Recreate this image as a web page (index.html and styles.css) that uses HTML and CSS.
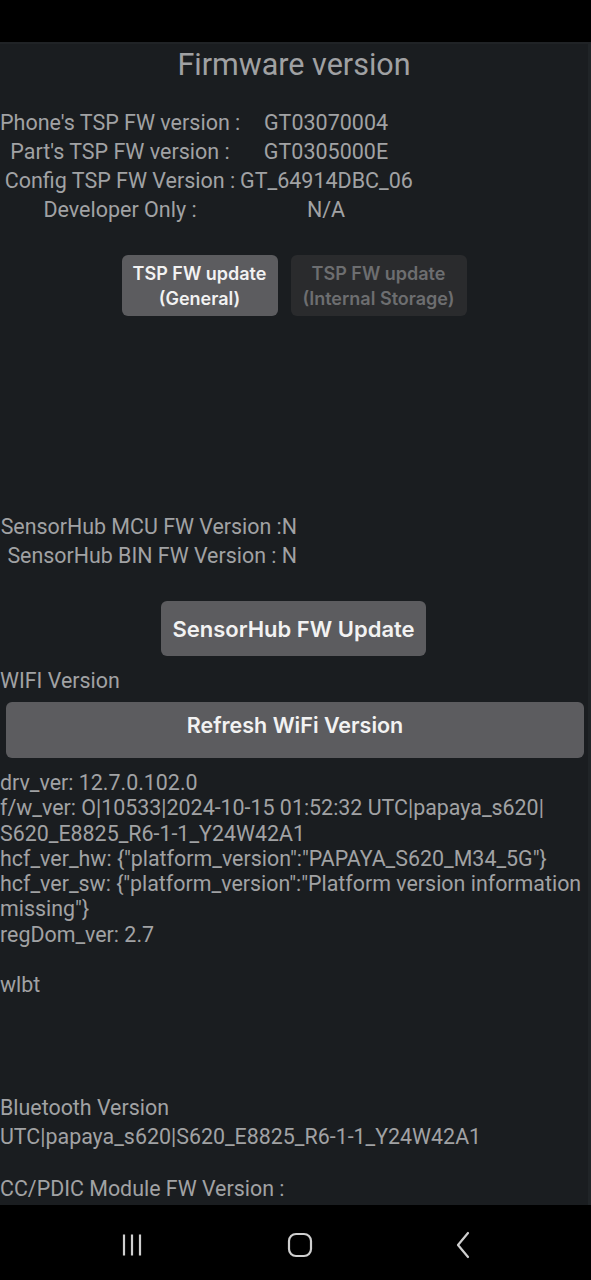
FILE: index.html
```html
<!DOCTYPE html>
<html>
<head>
<meta charset="utf-8">
<link rel="stylesheet" href="styles.css">
</head>
<body>
<div class="screen">
  <div class="statusbar"></div>
  <main class="content">
    <h1 class="title">Firmware version</h1>
    <div class="fwgrid">
      <div class="lbl">Phone's TSP FW version :</div><div class="val">GT03070004</div>
      <div class="lbl">Part's TSP FW version :</div><div class="val">GT0305000E</div>
      <div class="lbl">Config TSP FW Version :</div><div class="val">GT_64914DBC_06</div>
      <div class="lbl">Developer Only :</div><div class="val">N/A</div>
    </div>
    <div class="btnrow">
      <button class="btn btn-small btn-general">TSP FW update<br>(General)</button>
      <button class="btn btn-small btn-disabled">TSP FW update<br>(Internal Storage)</button>
    </div>
    <div class="sensor">
      <div class="line">SensorHub MCU FW Version :N</div>
      <div class="line">SensorHub BIN FW Version : N</div>
    </div>
    <div class="center">
      <button class="btn btn-big">SensorHub FW Update</button>
    </div>
    <div class="line wifi-label">WIFI Version</div>
    <button class="btn btn-wide">Refresh WiFi Version</button>
    <div class="wifi-info">
      drv_ver: 12.7.0.102.0<br>
      f/w_ver: O|10533|2024-10-15 01:52:32 UTC|papaya_s620|<br>S620_E8825_R6-1-1_Y24W42A1<br>
      hcf_ver_hw: {"platform_version":"PAPAYA_S620_M34_5G"}<br>
      hcf_ver_sw: {"platform_version":"Platform version information<br>missing"}<br>
      regDom_ver: 2.7<br>
      <br>
      wlbt
    </div>
    <div class="line bt-label">Bluetooth Version</div>
    <div class="line">UTC|papaya_s620|S620_E8825_R6-1-1_Y24W42A1</div>
    <div class="line cc-label">CC/PDIC Module FW Version :</div>
  </main>
  <nav class="navbar">
    <svg class="nav-icon" width="24" height="24" viewBox="0 0 24 24" aria-hidden="true">
      <path d="M3 1.5v21M11 1.5v21M19 1.5v21" stroke="#cfcfcf" stroke-width="2.2" fill="none"/>
    </svg>
    <svg class="nav-icon" width="26" height="26" viewBox="0 0 26 26" aria-hidden="true">
      <rect x="2" y="2" width="22" height="22" rx="7" stroke="#cfcfcf" stroke-width="2.2" fill="none"/>
    </svg>
    <svg class="nav-icon" width="16" height="28" viewBox="0 0 16 28" aria-hidden="true">
      <path d="M13 2L3 14l10 12" stroke="#cfcfcf" stroke-width="2.2" fill="none" stroke-linecap="round" stroke-linejoin="round"/>
    </svg>
  </nav>
</div>
</body>
</html>
```

FILE: styles.css
```css
* { box-sizing: border-box; }
html, body {
  margin: 0;
  padding: 0;
  background: #000;
}
.screen {
  width: 591px;
  height: 1280px;
  display: flex;
  flex-direction: column;
  overflow: hidden;
  font-family: Roboto, "Liberation Sans", sans-serif;
  color: #a1a2a4;
}
.statusbar {
  height: 42px;
  background: #000;
  flex: none;
}
.content {
  flex: 1;
  background: #1a1d20;
  overflow: hidden;
  border-right: 3px solid #202427;
  border-top: 2px solid #202326;
}
.title {
  margin: 4px 0 0;
  font-weight: 400;
  font-size: 30.5px;
  line-height: 34px;
  text-align: center;
  color: #a0a1a3;
}
.fwgrid {
  margin-top: 26px;
  display: grid;
  grid-template-columns: 240px 172px;
  font-size: 21.5px;
  line-height: 29px;
  text-align: center;
  white-space: nowrap;
}
.btnrow {
  margin-top: 31px;
  display: flex;
  justify-content: center;
  gap: 13px;
}
.btn {
  font-family: Inter, "Noto Sans", sans-serif;
  font-weight: 600;
  color: #f2f2f2;
  background: #5c5c5f;
  border: none;
  border-radius: 6px;
  padding: 0 8px;
  white-space: nowrap;
}
.btn-small {
  font-size: 18px;
  line-height: 25px;
  height: 61px;
}
.btn-general { width: 156px; }
.btn-disabled {
  width: 176px;
  background: #2a2b2d;
  color: #6d6e70;
}
.sensor {
  margin-top: 196px;
  display: flex;
  flex-direction: column;
  align-items: flex-end;
  width: 297px;
}
.line {
  font-size: 21.4px;
  line-height: 29px;
  white-space: nowrap;
}
.center {
  margin-top: 31px;
  display: flex;
  justify-content: center;
  padding-right: 1px;
}
.btn-big {
  font-size: 22px;
  height: 55px;
  width: 265px;
}
.wifi-label {
  margin-top: 10px;
}
.btn-wide {
  display: block;
  font-size: 21.5px;
  width: 578px;
  margin: 7px 0 0 6px;
  height: 56px;
  padding-bottom: 10px;
}
.wifi-info {
  margin-top: 12px;
  font-size: 21.4px;
  line-height: 25.25px;
  white-space: nowrap;
}
.bt-label {
  margin-top: 96px;
}
.cc-label {
  margin-top: 23px;
}
.navbar {
  height: 75px;
  flex: none;
  background: #000;
  display: flex;
  align-items: center;
  justify-content: space-between;
  padding: 5px 120px 0 121px;
}
.nav-icon { display: block; }
```
